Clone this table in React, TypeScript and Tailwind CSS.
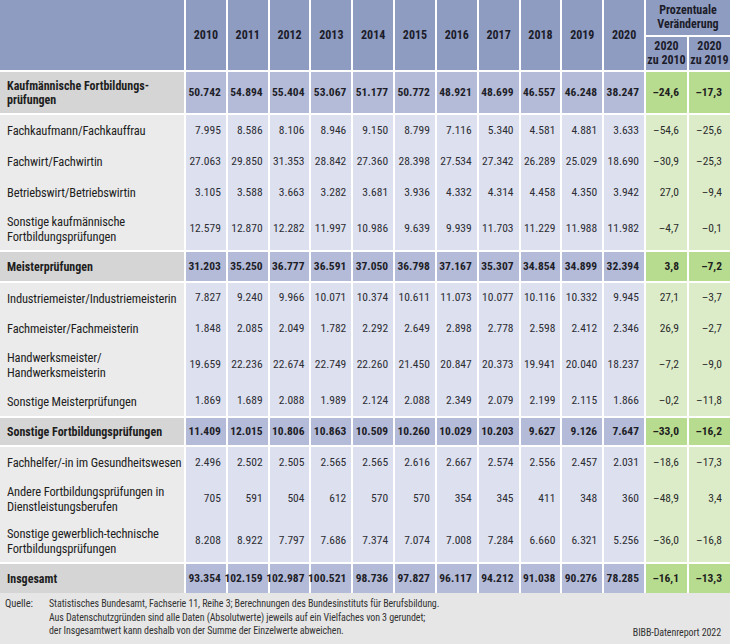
import React from "react";

const YEARS = ["2010", "2011", "2012", "2013", "2014", "2015", "2016", "2017", "2018", "2019", "2020"];

type R = { label: string[]; vals: string[]; h: string };
type G = { head: R; subs: R[] };

const GROUPS: G[] = [
  {
    head: {
      label: ["Kaufmännische Fortbildungs-", "prüfungen"],
      vals: ["50.742", "54.894", "55.404", "53.067", "51.177", "50.772", "48.921", "48.699", "46.557", "46.248", "38.247", "–24,6", "–17,3"],
      h: "h-[41px]",
    },
    subs: [
      { label: ["Fachkaufmann/Fachkauffrau"], vals: ["7.995", "8.586", "8.106", "8.946", "9.150", "8.799", "7.116", "5.340", "4.581", "4.881", "3.633", "–54,6", "–25,6"], h: "h-[31px]" },
      { label: ["Fachwirt/Fachwirtin"], vals: ["27.063", "29.850", "31.353", "28.842", "27.360", "28.398", "27.534", "27.342", "26.289", "25.029", "18.690", "–30,9", "–25,3"], h: "h-[31px]" },
      { label: ["Betriebswirt/Betriebswirtin"], vals: ["3.105", "3.588", "3.663", "3.282", "3.681", "3.936", "4.332", "4.314", "4.458", "4.350", "3.942", "27,0", "–9,4"], h: "h-[31px]" },
      { label: ["Sonstige kaufmännische", "Fortbildungsprüfungen"], vals: ["12.579", "12.870", "12.282", "11.997", "10.986", "9.639", "9.939", "11.703", "11.229", "11.988", "11.982", "–4,7", "–0,1"], h: "h-[42px]" },
    ],
  },
  {
    head: {
      label: ["Meisterprüfungen"],
      vals: ["31.203", "35.250", "36.777", "36.591", "37.050", "36.798", "37.167", "35.307", "34.854", "34.899", "32.394", "3,8", "–7,2"],
      h: "h-[29px]",
    },
    subs: [
      { label: ["Industriemeister/Industriemeisterin"], vals: ["7.827", "9.240", "9.966", "10.071", "10.374", "10.611", "11.073", "10.077", "10.116", "10.332", "9.945", "27,1", "–3,7"], h: "h-[30px]" },
      { label: ["Fachmeister/Fachmeisterin"], vals: ["1.848", "2.085", "2.049", "1.782", "2.292", "2.649", "2.898", "2.778", "2.598", "2.412", "2.346", "26,9", "–2,7"], h: "h-[31px]" },
      { label: ["Handwerksmeister/", "Handwerksmeisterin"], vals: ["19.659", "22.236", "22.674", "22.749", "22.260", "21.450", "20.847", "20.373", "19.941", "20.040", "18.237", "–7,2", "–9,0"], h: "h-[42px]" },
      { label: ["Sonstige Meisterprüfungen"], vals: ["1.869", "1.689", "2.088", "1.989", "2.124", "2.088", "2.349", "2.079", "2.199", "2.115", "1.866", "–0,2", "–11,8"], h: "h-[30px]" },
    ],
  },
  {
    head: {
      label: ["Sonstige Fortbildungsprüfungen"],
      vals: ["11.409", "12.015", "10.806", "10.863", "10.509", "10.260", "10.029", "10.203", "9.627", "9.126", "7.647", "–33,0", "–16,2"],
      h: "h-[27px]",
    },
    subs: [
      { label: ["Fachhelfer/-in im Gesundheitswesen"], vals: ["2.496", "2.502", "2.505", "2.565", "2.565", "2.616", "2.667", "2.574", "2.556", "2.457", "2.031", "–18,6", "–17,3"], h: "h-[31px]" },
      { label: ["Andere Fortbildungsprüfungen in", "Dienstleistungsberufen"], vals: ["705", "591", "504", "612", "570", "570", "354", "345", "411", "348", "360", "–48,9", "3,4"], h: "h-[42px]" },
      { label: ["Sonstige gewerblich-technische", "Fortbildungsprüfungen"], vals: ["8.208", "8.922", "7.797", "7.686", "7.374", "7.074", "7.008", "7.284", "6.660", "6.321", "5.256", "–36,0", "–16,8"], h: "h-[42px]" },
    ],
  },
];

const TOTAL: R = {
  label: ["Insgesamt"],
  vals: ["93.354", "102.159", "102.987", "100.521", "98.736", "97.827", "96.117", "94.212", "91.038", "90.276", "78.285", "–16,1", "–13,3"],
  h: "h-[29px]",
};

function Row({ r, bold }: { r: R; bold: boolean }) {
  return (
    <div className={`grid grid-cols-[184px_repeat(11,minmax(0,1fr))_41px_41px] gap-x-[2px] ${r.h}`}>
      <div
        className={`flex flex-col justify-center pl-[7px] text-[#1e1e1e] ${
          bold
            ? "bg-[#d5d5d5] font-bold text-[12px] leading-[14px]"
            : "bg-[#ebebeb] text-[12.5px] leading-[15px] tracking-[-0.15px]"
        }`}
      >
        {r.label.map((l) => (
          <span key={l} className="whitespace-nowrap">{l}</span>
        ))}
      </div>
      {r.vals.slice(0, 11).map((v, i) => (
        <div
          key={i}
          className={`flex items-center justify-end pr-[5px] text-[11.5px] ${
            bold ? "bg-[#b4bbd9] font-bold text-[#1e1e28]" : "bg-[#dce0ef] text-[#2d2d33]"
          }`}
        >
          {v}
        </div>
      ))}
      {r.vals.slice(11).map((v, i) => (
        <div
          key={"g" + i}
          className={`flex items-center justify-end pr-[8px] text-[11.5px] ${
            bold ? "bg-[#b8dc8f] font-bold text-[#1e1e1e]" : "bg-[#dcecc9] text-[#2d2d2d]"
          }`}
        >
          {v}
        </div>
      ))}
    </div>
  );
}

export default function App() {
  return (
    <div className="w-[730px] h-[644px] bg-white overflow-hidden font-stretch-condensed font-['Roboto_Condensed','Noto_Sans_Condensed','Liberation_Sans_Narrow','Noto_Sans',sans-serif]">
      <div className="grid grid-cols-[184px_repeat(11,minmax(0,1fr))_41px_41px] grid-rows-[35px_33px] gap-x-[2px] gap-y-[2px] h-[70px] text-[12px] font-bold text-[#1c1c2a]">
        <div className="row-span-2 bg-[#8f9cc2]" />
        {YEARS.map((y) => (
          <div key={y} className="row-span-2 bg-[#8f9cc2] flex items-center justify-center">
            {y}
          </div>
        ))}
        <div className="col-span-2 bg-[#8f9cc2] flex flex-col items-center justify-center leading-[13.5px]">
          <span>Prozentuale</span>
          <span>Veränderung</span>
        </div>
        <div className="bg-[#8f9cc2] flex flex-col items-center justify-center leading-[13.5px]">
          <span>2020</span>
          <span>zu 2010</span>
        </div>
        <div className="bg-[#8f9cc2] flex flex-col items-center justify-center leading-[13.5px]">
          <span>2020</span>
          <span>zu 2019</span>
        </div>
      </div>

      {GROUPS.map((g) => (
        <div key={g.head.label[0]}>
          <div className="mt-[2px]">
            <Row r={g.head} bold />
          </div>
          <div className="mt-[2px]">
            {g.subs.map((s) => (
              <Row key={s.label[0]} r={s} bold={false} />
            ))}
          </div>
        </div>
      ))}
      <div className="mt-[2px]">
        <Row r={TOTAL} bold />
      </div>

      <div className="h-[51px] bg-[#e6e6e6] pt-[4px] pl-[5px] pr-[9px] flex text-[10px] tracking-[-0.1px] leading-[13.5px] text-[#333]">
        <span className="w-[44px] shrink-0 text-[10.5px]">Quelle:</span>
        <div className="flex-1 flex flex-col">
          <span>Statistisches Bundesamt, Fachserie 11, Reihe 3; Berechnungen des Bundesinstituts für Berufsbildung.</span>
          <span>Aus Datenschutzgründen sind alle Daten (Absolutwerte) jeweils auf ein Vielfaches von 3 gerundet;</span>
          <div className="flex justify-between">
            <span>der Insgesamtwert kann deshalb von der Summe der Einzelwerte abweichen.</span>
            <span className="pt-[2px]">BIBB-Datenreport 2022</span>
          </div>
        </div>
      </div>
    </div>
  );
}
